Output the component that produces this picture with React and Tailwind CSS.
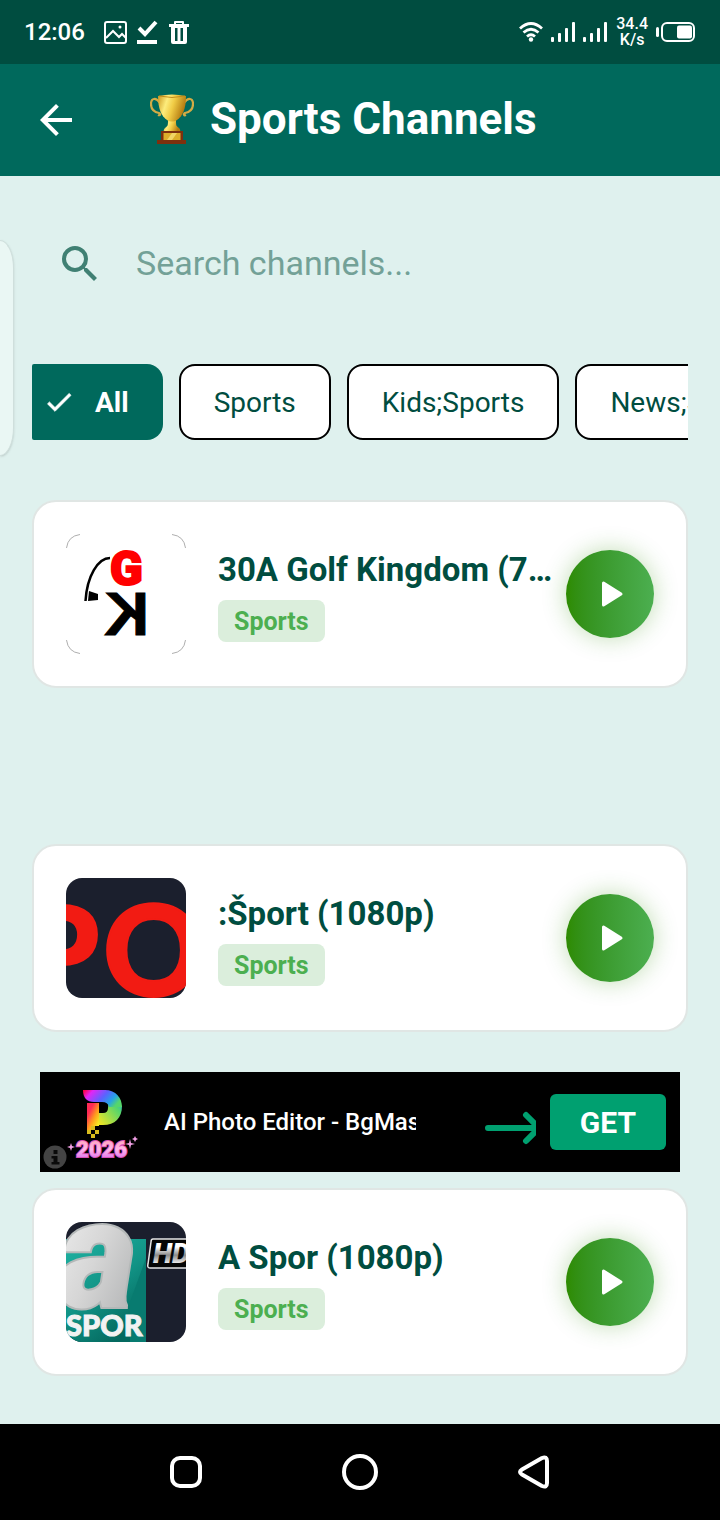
import React, { useState } from 'react';
import { clsx } from 'clsx';

const CATEGORIES = ['All', 'Sports', 'Kids;Sports', 'News;Sports'];

const CHANNELS = [
    { id: 'golf', name: '30A Golf Kingdom (720p)', category: 'Sports', Logo: GolfKingdomLogo, ad: 'empty' },
    { id: 'sport', name: ':Šport (1080p)', category: 'Sports', Logo: SportLogo, ad: 'banner' },
    { id: 'aspor', name: 'A Spor (1080p)', category: 'Sports', Logo: ASporLogo, ad: null },
];

function SignalBars() {
    return (
        <svg viewBox="0 0 24 20" className="h-5 w-6" fill="currentColor" aria-hidden="true">
            <rect x="0" y="15" width="3" height="5" rx="1" />
            <rect x="7" y="11" width="3" height="9" rx="1" />
            <rect x="14" y="6" width="3" height="14" rx="1" />
            <rect x="21" y="0" width="3" height="20" rx="1" />
        </svg>
    );
}

function StatusBar() {
    return (
        <div className="flex h-16 items-center justify-between bg-[#004d40] px-6 text-white">
            <div className="flex items-center gap-2">
                <span className="mr-2.5 text-2xl font-medium">12:06</span>
                <svg viewBox="0 0 24 24" className="size-6" fill="none" stroke="currentColor" strokeWidth="2" aria-hidden="true">
                    <rect x="2" y="2" width="21" height="21" rx="2" />
                    <path d="M3 18l7-7 6 6 3-3 4 4" />
                    <circle cx="17" cy="7" r="1.500" fill="currentColor" stroke="none" />
                </svg>
                <svg viewBox="0 0 24 24" className="size-6" fill="none" stroke="currentColor" aria-hidden="true">
                    <path d="M4 8l6 6L21 2" strokeWidth="4" />
                    <path d="M2 22h20" strokeWidth="4" />
                </svg>
                <svg viewBox="0 0 24 24" className="size-6" fill="currentColor" aria-hidden="true">
                    <path fillRule="evenodd" d="M7 4V2q0-1 1-1h8q1 0 1 1v2h5v3h-2v15q0 2-2 2H6q-2 0-2-2V7H2V4zm2 0h6V3H9zM8 8v13h2.500V8zm5.500 0v13H16V8z" />
                </svg>
            </div>
            <div className="flex items-center gap-2">
                <svg viewBox="0 0 24 20" className="h-5 w-6" fill="none" stroke="currentColor" strokeWidth="2.800" aria-hidden="true">
                    <path d="M1 6.500q11-10 22 0M4.500 10.500q7.500-6.500 15 0M8 14.500q4-3.500 8 0" />
                    <circle cx="12" cy="17.500" r="2.200" fill="currentColor" stroke="none" />
                </svg>
                <SignalBars />
                <SignalBars />
                <div className="ml-px text-center text-base leading-4 font-medium">
                    <div>34.4</div>
                    <div>K/s</div>
                </div>
                <svg viewBox="0 0 40 20" className="h-5 w-10" fill="currentColor" aria-hidden="true">
                    <rect x="0" y="5" width="3" height="10" rx="1.500" />
                    <rect x="6" y="1" width="32" height="18" rx="5" fill="none" stroke="currentColor" strokeWidth="2" />
                    <rect x="21" y="3.500" width="15" height="13" rx="2" />
                </svg>
            </div>
        </div>
    );
}

function Trophy() {
    return (
        <svg viewBox="0 0 44 50" className="h-[50px] w-11" aria-hidden="true">
            <defs>
                <linearGradient id="cup" x1="0" x2="1" y1="0" y2="0.300">
                    <stop offset="0" stopColor="#c9941c" />
                    <stop offset="0.350" stopColor="#fdec7c" />
                    <stop offset="0.600" stopColor="#f0cb45" />
                    <stop offset="1" stopColor="#b37a10" />
                </linearGradient>
            </defs>
            <path d="M10 9C6 3 1 4 1 10c0 6 3 8 8 9 2 1 1 3-1 2M34 9c4-6 9-5 9 1 0 6-3 8-8 9-2 1-1 3 1 2" fill="none" stroke="#d2ab45" strokeWidth="2.200" />
            <path d="M18 26h8c0 5 0 6 3 8 2 2 1 4 1 4H14s-1-2 1-4c3-2 3-3 3-8z" fill="url(#cup)" />
            <path d="M8 2q14-3 28 0c0 12-3 20-9 24-3 2-7 2-10 0C11 22 8 14 8 2z" fill="url(#cup)" />
            <path d="M9 2q13 3 26 0" fill="none" stroke="#c28d1b" />
            <path d="M11 37h22v9h3v4H7v-4h4z" fill="#7d300e" />
            <path d="M13.500 39h17v7h-17z" fill="#dcae2a" />
            <path d="M17 46l5-7h5l-5 7z" fill="#f1d565" />
        </svg>
    );
}

function Header() {
    return (
        <header className="flex h-28 items-center bg-[#00695c] px-8 text-white">
            <button type="button" aria-label="Back" className="mr-[70px] size-12">
                <svg viewBox="0 0 24 24" fill="currentColor">
                    <path d="M20 11H7.830l5.590-5.590L12 4l-8 8 8 8 1.410-1.410L7.830 13H20z" />
                </svg>
            </button>
            <h1 className="flex items-center gap-4 pb-0.5 text-[44px] leading-[52px] font-bold">
                <Trophy />
                Sports Channels
            </h1>
        </header>
    );
}

function SearchField({ value, onChange }) {
    return (
        <label className="mt-8 flex h-28 items-center gap-8 pl-6">
            <svg viewBox="0 0 24 24" className="size-12 shrink-0 text-[#408073]" fill="currentColor" aria-hidden="true">
                <path d="M15.500 14h-.790l-.280-.270A6.470 6.470 0 0 0 16 9.500 6.500 6.500 0 1 0 9.500 16c1.610 0 3.090-.590 4.230-1.570l.270.280v.790l5 4.990L20.490 19zm-6 0a4.500 4.500 0 1 1 0-9 4.500 4.500 0 0 1 0 9z" />
            </svg>
            <input
                type="search"
                aria-label="Search channels"
                placeholder="Search channels..."
                value={value}
                onChange={(e) => onChange(e.target.value)}
                className="w-full bg-transparent pb-0.5 text-[34px] text-[#004d40] outline-none placeholder:text-[#73a197]"
            />
        </label>
    );
}

function Filters({ selected, onSelect }) {
    return (
        <div className="mt-11 flex gap-4 overflow-hidden text-[28px] leading-8">
            {CATEGORIES.map((category) => (
                <button
                    key={category}
                    type="button"
                    aria-pressed={selected === category}
                    onClick={() => onSelect(category)}
                    className={clsx(
                        'flex h-19 shrink-0 items-center',
                        selected === category
                            ? 'gap-5 rounded-l-xs rounded-r-2xl bg-[#00695c] pr-[34px] pl-3 font-bold text-white'
                            : 'rounded-2xl border-2 border-black bg-white px-[33px] text-[#004d40]'
                    )}
                >
                    {selected === category && (
                        <svg viewBox="0 0 24 24" className="-ml-px size-8" fill="currentColor" stroke="currentColor" strokeWidth="0.600" aria-hidden="true">
                            <path d="M9 16.170L4.830 12l-1.420 1.410L9 19 21 7l-1.410-1.410z" />
                        </svg>
                    )}
                    <span className="pt-0.5">{category}</span>
                </button>
            ))}
        </div>
    );
}

function GolfKingdomLogo() {
    return (
        <svg viewBox="0 0 120 120" className="size-30 shrink-0" role="img" aria-label="30A Golf Kingdom">
            <path d="M0.500 14Q2 2 14 0.500M106 0.500Q118 2 119.500 14M119.500 106Q118 118 106 119.500M14 119.500Q2 118 0.500 106" fill="none" stroke="#999" strokeWidth="0.800" />
            <path d="M44 24C32 24 21 42 19.500 67" fill="none" stroke="#000" strokeWidth="2.500" />
            <path d="M23 57l9 3v6l-10 1z" />
            <text x="44" y="51" fontSize="48" fontWeight="900" fill="#f00" stroke="#f00" strokeWidth="2" className="font-[Roboto]">G</text>
            <text x="-83" y="101" fontSize="62" fontWeight="700" stroke="#000" strokeWidth="1" transform="scale(-1 1)" className="font-['Liberation_Sans']">K</text>
        </svg>
    );
}

function SportLogo() {
    return (
        <svg viewBox="0 0 120 120" className="size-30 shrink-0 rounded-2xl bg-[#1b1f2d]" role="img" aria-label="Šport">
            <g fill="#f21b13" stroke="#f21b13" strokeWidth="2" fontWeight="900" className="font-[Lato]">
                <text x="-45" y="118" fontSize="125">P</text>
                <text x="37" y="118" fontSize="125">O</text>
            </g>
        </svg>
    );
}

function ASporLogo() {
    return (
        <svg viewBox="0 0 120 120" className="size-30 shrink-0 rounded-2xl bg-[#1b1f2d]" role="img" aria-label="A Spor HD">
            <defs>
                <linearGradient id="teal" x1="0" x2="0.600" y1="0" y2="1">
                    <stop offset="0" stopColor="#1fb3a3" />
                    <stop offset="0.550" stopColor="#129486" />
                    <stop offset="1" stopColor="#04695f" />
                </linearGradient>
                <linearGradient id="silver" x1="0" x2="1" y1="0" y2="1">
                    <stop offset="0" stopColor="#f4f4f4" />
                    <stop offset="0.500" stopColor="#d6d6d6" />
                    <stop offset="1" stopColor="#a9abac" />
                </linearGradient>
                <linearGradient id="chrome" x1="0" x2="0" y1="0" y2="1">
                    <stop offset="0.300" stopColor="#fff" />
                    <stop offset="0.550" stopColor="#8c8c8c" />
                    <stop offset="0.800" stopColor="#eee" />
                </linearGradient>
            </defs>
            <path d="M0 17h80v103H0z" fill="url(#teal)" />
            <path d="M64 80L80 36v84H64z" fill="#087b70" />
            <text x="-8" y="85" fontSize="152" fontStyle="italic" fontWeight="900" fill="url(#silver)" stroke="#b4b8b8" strokeWidth="4" paintOrder="stroke" className="font-[Roboto]">a</text>
            <path d="M87 17h37v29H84q-3 0-2-4l3-22q0-3 2-3z" fill="#050505" stroke="#e6e6e6" strokeWidth="1.500" />
            <text x="87" y="41" fontSize="28" fontStyle="italic" fontWeight="900" fill="url(#chrome)" className="font-[Roboto]">HD</text>
            <text x="0" y="114" fontSize="29" fontWeight="900" fill="#f2f2f2" stroke="#f2f2f2" strokeWidth="1" className="font-[Lato]">SPOR</text>
        </svg>
    );
}

function ChannelCard({ channel }) {
    const { Logo } = channel;

    return (
        <li className="flex items-center gap-8 rounded-3xl border-2 border-[#e0e6e4] bg-white p-8">
            <Logo />
            <div className="min-w-0 flex-1">
                <h2 className="truncate pt-0.5 text-[33px] leading-11 font-bold text-[#004d40]">{channel.name}</h2>
                <span className="mt-2 block w-fit rounded-lg bg-[#dbeedc] px-4 pt-0.5 text-[25px] leading-10 font-bold text-[#4caf50]">
                    {channel.category}
                </span>
            </div>
            <button
                type="button"
                aria-label={`Play ${channel.name}`}
                className="-ml-5 flex size-22 shrink-0 items-center justify-center rounded-full bg-linear-to-r from-[#2e8b00] to-[#4caf50] shadow-[0_0_24px_rgba(46,139,0,0.3)]"
            >
                <svg viewBox="0 0 24 28" className="ml-1 h-7 w-6" fill="#fff" stroke="#fff" strokeWidth="3" strokeLinejoin="round">
                    <path d="M3.500 3v22L21 14z" />
                </svg>
            </button>
        </li>
    );
}

function AdLogo() {
    return (
        <svg viewBox="0 0 100 100" className="size-25 shrink-0" role="img" aria-label="BgMaster 2026">
            <defs>
                <linearGradient id="rainbow" x1="0" x2="1" y1="0.100" y2="0.500">
                    <stop offset="0" stopColor="#f04" />
                    <stop offset="0.200" stopColor="#e126f5" />
                    <stop offset="0.550" stopColor="#5b62ff" />
                    <stop offset="0.800" stopColor="#25a2e8" />
                    <stop offset="1" stopColor="#55d66b" />
                </linearGradient>
                <linearGradient id="warm" x1="0" x2="0.700" y1="0.200" y2="1">
                    <stop offset="0.200" stopColor="#ff2a55" />
                    <stop offset="0.600" stopColor="#ff9b1e" />
                    <stop offset="1" stopColor="#f6ec22" />
                </linearGradient>
                <linearGradient id="green" x1="0" x2="1" y1="0.800" y2="0">
                    <stop offset="0" stopColor="#f5e622" />
                    <stop offset="0.700" stopColor="#55d66b" />
                    <stop offset="1" stopColor="#25a2e8" />
                </linearGradient>
                <linearGradient id="pink" x1="0" x2="0" y1="0" y2="1">
                    <stop offset="0" stopColor="#ff9fb0" />
                    <stop offset="0.500" stopColor="#ffb8e8" />
                    <stop offset="1" stopColor="#d45cf0" />
                </linearGradient>
            </defs>
            {/* fita colorida do logotipo */}
            <path d="M55 41h8q5 0 5-5l1-10 13 8c0 12-7 19-19 19H55z" fill="url(#green)" />
            <path d="M43 18h22c11 0 17 8 17 17H69q-1-5-7-5h-8c-7 0-11-4-11-12z" fill="url(#rainbow)" />
            <path d="M47 31h12v23h-4v4h-8z" fill="url(#warm)" />
            <path d="M51 54h4v4h-4zM47 58h4v4h-4zM55 58h4v4h-4zM51 62h4v4h-4z" fill="#d9bd1e" />
            <text x="36" y="85" fontSize="22" fontWeight="900" fill="url(#pink)" stroke="#d850b8" strokeWidth="2" paintOrder="stroke" className="font-[Roboto]">2026</text>
            <path d="M31 71l1 3 3 1-3 1-1 3-1-3-3-1 3-1zM90 67l1 4 4 1-4 1-1 4-1-4-4-1 4-1zM95 64l1 2 2 1-2 1-1 2-1-2-2-1 2-1z" fill="#f3a0e6" />
            <circle cx="15" cy="85" r="11.500" fill="#444" />
            <path d="M13.500 78h4v4h-4zM11.500 84h6v6h2v2.500h-8V90h2v-3.500h-2z" fill="#0a0a0a" />
        </svg>
    );
}

function AdBanner() {
    return (
        <aside className="mx-2 flex h-25 items-center bg-black pr-3.5">
            <AdLogo />
            <p className="ml-6 w-[252px] overflow-hidden text-2xl font-medium whitespace-nowrap text-white">AI Photo Editor - BgMaster</p>
            <svg viewBox="0 0 52 34" className="mt-3 ml-auto h-[34px] w-[52px] shrink-0" fill="none" stroke="#00a070" strokeWidth="6" strokeLinecap="round" aria-hidden="true">
                <path d="M4 17h48M42 4l13 13-13 13" />
            </svg>
            <button type="button" className="ml-3.5 h-14 shrink-0 rounded-md bg-[#00a070] px-[30px] text-[30px] font-bold text-white">
                GET
            </button>
        </aside>
    );
}

function NavigationBar() {
    return (
        <nav className="flex h-24 items-center justify-center gap-[130px] bg-black text-white">
            <button type="button" aria-label="Recent apps" className="size-11">
                <svg viewBox="0 0 44 44" fill="none" stroke="currentColor" strokeWidth="4">
                    <rect x="8" y="8" width="28" height="28" rx="8" />
                </svg>
            </button>
            <button type="button" aria-label="Home" className="size-11">
                <svg viewBox="0 0 44 44" fill="none" stroke="currentColor" strokeWidth="4">
                    <circle cx="22" cy="22" r="16" />
                </svg>
            </button>
            <button type="button" aria-label="Back" className="size-11">
                <svg viewBox="0 0 44 44" fill="none" stroke="currentColor" strokeWidth="4" strokeLinejoin="round">
                    <path d="M10 19.500L30 8q5-2 5 3v22q0 5-5 3L10 24.500q-4-2.500 0-5z" />
                </svg>
            </button>
        </nav>
    );
}

export default function App() {
    const [search, setSearch] = useState('');
    const [category, setCategory] = useState('All');

    const channels = CHANNELS.filter((channel) => {
        const matchesName = channel.name.toLowerCase().includes(search.toLowerCase());
        return matchesName && (category === 'All' || channel.category === category);
    });

    return (
        <div className="relative flex min-h-screen flex-col bg-[#dff1ee] font-[Roboto,sans-serif]">
            <StatusBar />
            <Header />
            <main className="flex-1 px-8 pb-12">
                <SearchField value={search} onChange={setSearch} />
                <Filters selected={category} onSelect={setCategory} />
                <ul className="mt-15">
                    {channels.map((channel) => (
                        <React.Fragment key={channel.id}>
                            <ChannelCard channel={channel} />
                            {channel.ad && (
                                <li className="h-39 pt-10">
                                    {channel.ad === 'banner' && <AdBanner />}
                                </li>
                            )}
                        </React.Fragment>
                    ))}
                </ul>
            </main>
            <NavigationBar />
            {/* Alça do painel lateral do sistema */}
            <div className="absolute top-60 left-0 h-54 w-3.5 rounded-[0_14px_14px_0/0_28px_28px_0] border border-l-0 border-[#cfdfdc] bg-[#eaf7f4] shadow-sm" />
        </div>
    );
}
